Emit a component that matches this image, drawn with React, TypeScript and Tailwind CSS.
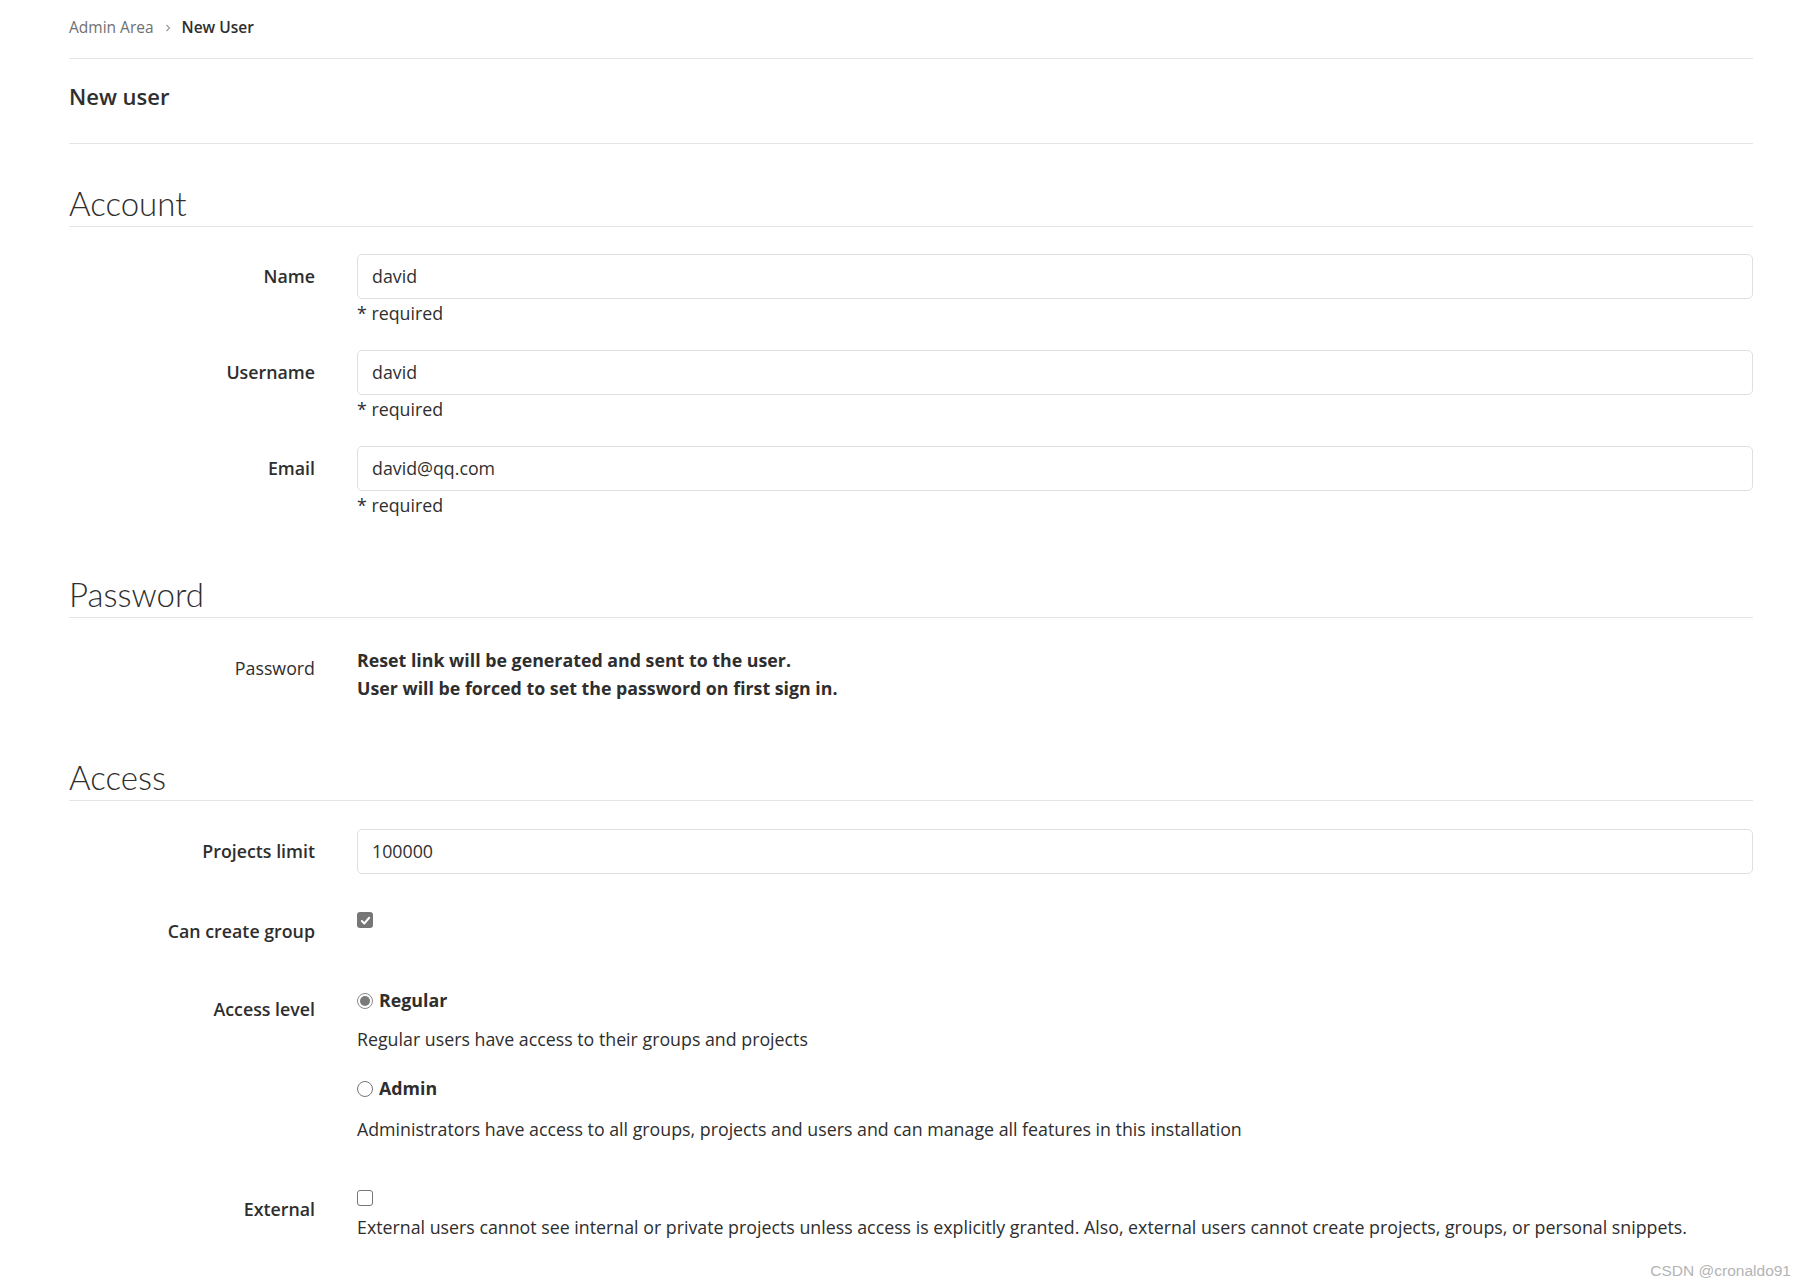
import React from "react";

function Label({ children, pt, bold = true }: { children: React.ReactNode; pt: string; bold?: boolean }) {
  return (
    <div className={`w-[288px] shrink-0 pr-[42px] text-right leading-[25px] ${pt} ${bold ? "font-semibold" : "font-normal"}`}>
      {children}
    </div>
  );
}

function TextRow({ label, value, mb }: { label: string; value: string; mb: string }) {
  return (
    <div className={`flex ${mb}`}>
      <div className="w-[288px] shrink-0 pr-[42px] h-[45px] flex items-center justify-end font-semibold leading-[25px]">
        {label}
      </div>
      <div className="flex-1">
        <div className="h-[45px] border border-[#dfdfdf] rounded-[5px] px-[14px] flex items-center text-[#303030]">
          {value}
        </div>
        <div className="mt-[2px] leading-[24px]">* required</div>
      </div>
    </div>
  );
}

function Heading({ children, mt }: { children: React.ReactNode; mt: string }) {
  return (
    <h3 className={`${mt} font-['Lato',sans-serif] text-[33px] leading-[42px] font-light pb-[2px] border-b border-[#e5e5e5] text-[#2e2e2e]`}>
      {children}
    </h3>
  );
}

function CheckBox({ checked }: { checked: boolean }) {
  return checked ? (
    <span className="w-[16px] h-[16px] rounded-[3px] bg-[#767676] flex items-center justify-center">
      <svg width="11" height="11" viewBox="0 0 12 12">
        <path d="M2 6.5 L4.8 9.2 L10 3" fill="none" stroke="#fff" strokeWidth="2.2" strokeLinecap="round" strokeLinejoin="round" />
      </svg>
    </span>
  ) : (
    <span className="w-[16px] h-[16px] rounded-[3px] border border-[#767676] bg-white block" />
  );
}

function Radio({ checked }: { checked: boolean }) {
  return checked ? (
    <span className="w-[16px] h-[16px] rounded-full border border-[#8a8a8a] bg-white flex items-center justify-center">
      <span className="w-[10px] h-[10px] rounded-full bg-[#7a7a7a]" />
    </span>
  ) : (
    <span className="w-[16px] h-[16px] rounded-full border border-[#767676] bg-white block" />
  );
}

export default function App() {
  return (
    <div className="relative min-h-[1287px] bg-white text-[#2e2e2e] text-[17.8px] font-['Open_Sans','Lato',sans-serif]">
      <div className="ml-[69px] w-[1684px]">
        {/* breadcrumb */}
        <div className="h-[59px] border-b border-[#e5e5e5] flex items-center pb-[2px] text-[15.5px]">
          <span className="text-[#707070]">Admin Area</span>
          <svg className="mx-[9px]" width="10" height="10" viewBox="0 0 10 10">
            <path d="M3.5 2 L6.5 5 L3.5 8" fill="none" stroke="#999" strokeWidth="1.2" />
          </svg>
          <span className="font-semibold text-[#2e2e2e]">New User</span>
        </div>
        {/* page title */}
        <div className="h-[85px] border-b border-[#e5e5e5] pt-[24px]">
          <h2 className="text-[22px] leading-[26px] font-semibold text-[#2e2e2e]">New user</h2>
        </div>

        <Heading mt="mt-[38px]">Account</Heading>
        <div className="mt-[27px]">
          <TextRow label="Name" value="david" mb="mb-[25px]" />
          <TextRow label="Username" value="david" mb="mb-[25px]" />
          <TextRow label="Email" value="david@qq.com" mb="mb-0" />
        </div>

        <Heading mt="mt-[56px]">Password</Heading>
        <div className="flex mt-[28px]">
          <Label pt="pt-[10px]" bold={false}>Password</Label>
          <div className="flex-1 font-bold leading-[28px]">
            <div>Reset link will be generated and sent to the user.</div>
            <div>User will be forced to set the password on first sign in.</div>
          </div>
        </div>

        <Heading mt="mt-[54px]">Access</Heading>
        <div className="flex mt-[28px]">
          <div className="w-[288px] shrink-0 pr-[42px] h-[45px] flex items-center justify-end font-semibold">
            Projects limit
          </div>
          <div className="flex-1 h-[45px] border border-[#dfdfdf] rounded-[5px] px-[14px] flex items-center text-[#303030]">
            100000
          </div>
        </div>

        <div className="flex items-start mt-[26px]">
          <Label pt="pt-[19px]">Can create group</Label>
          <div className="flex-1 pt-[12px]">
            <CheckBox checked />
          </div>
        </div>

        <div className="flex items-start mt-[36px]">
          <Label pt="pt-[17px]">Access level</Label>
          <div className="flex-1 pt-[8px]">
            <div className="flex items-center h-[25px] gap-[6px]">
              <Radio checked />
              <span className="font-bold">Regular</span>
            </div>
            <div className="mt-[14px] leading-[25px]">Regular users have access to their groups and projects</div>
            <div className="mt-[24px] flex items-center h-[25px] gap-[6px]">
              <Radio checked={false} />
              <span className="font-bold">Admin</span>
            </div>
            <div className="mt-[16px] leading-[25px]">
              Administrators have access to all groups, projects and users and can manage all features in this installation
            </div>
          </div>
        </div>

        <div className="flex items-start mt-[37px]">
          <Label pt="pt-[18px]">External</Label>
          <div className="flex-1 pt-[11px]">
            <CheckBox checked={false} />
            <div className="mt-[9px] leading-[25px]">
              External users cannot see internal or private projects unless access is explicitly granted. Also, external users cannot create projects, groups, or personal snippets.
            </div>
          </div>
        </div>
      </div>

      <div className="absolute right-[15px] bottom-[5px] text-[15.5px] text-[#b4b4b4] font-['Liberation_Sans',sans-serif]">
        CSDN @cronaldo91
      </div>
    </div>
  );
}
